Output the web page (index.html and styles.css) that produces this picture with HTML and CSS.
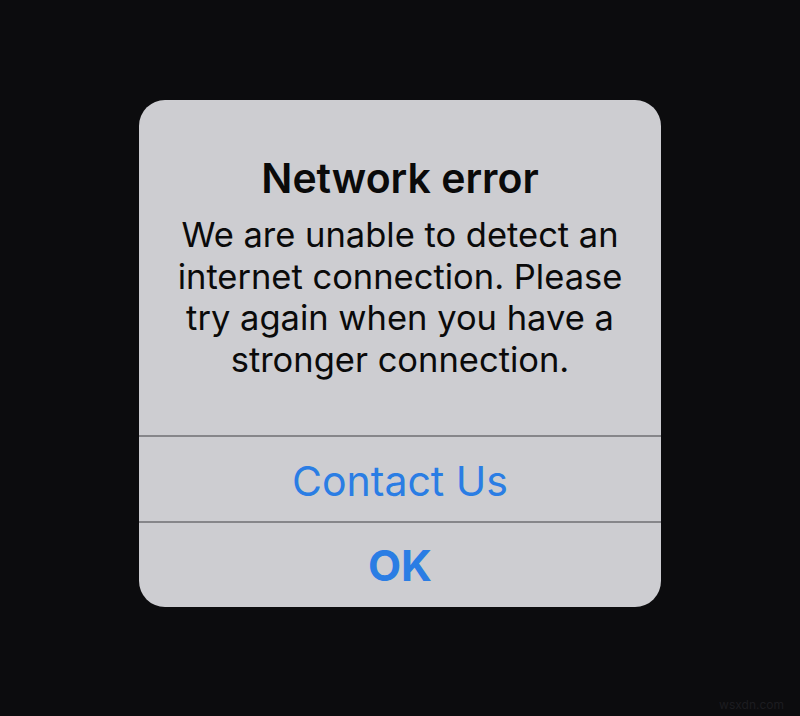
FILE: index.html
```html
<!DOCTYPE html>
<html>
<head>
<meta charset="utf-8">
<link rel="stylesheet" href="styles.css">
</head>
<body>
<div class="screen">
  <div class="alert">
    <div class="content">
      <div class="title">Network error</div>
      <div class="message">We are unable to detect an internet connection. Please try again when you have a stronger connection.</div>
    </div>
    <div class="btn contact">Contact Us</div>
    <div class="btn bold">OK</div>
  </div>
  <div class="watermark">wsxdn.com</div>
</div>
</body>
</html>
```
FILE: styles.css
```css
html, body {
  margin: 0;
  padding: 0;
  background: #0c0c0e;
}
.screen {
  width: 800px;
  height: 716px;
  box-sizing: border-box;
  padding: 100px 0 0 139px;
  position: relative;
  font-family: Inter, "Noto Sans", sans-serif;
}
.alert {
  width: 522px;
  height: 507px;
  background: #cdcdd1;
  border-radius: 26px;
  display: flex;
  flex-direction: column;
  overflow: hidden;
}
.content {
  height: 336px;
  box-sizing: border-box;
  padding: 54px 26px 0;
  text-align: center;
  color: #0a0a0a;
}
.title {
  font-size: 41px;
  font-weight: 600;
  line-height: 48px;
  margin-bottom: 12px;
}
.message {
  font-size: 34.5px;
  line-height: 41.5px;
}
.btn {
  height: 84px;
  box-sizing: content-box;
  border-top: 2px solid #86868a;
  display: flex;
  align-items: center;
  justify-content: center;
  color: #2a7de4;
  font-size: 41px;
}
.btn.contact {
  box-sizing: border-box;
  height: 86px;
  padding-top: 3px;
}
.btn.bold {
  font-weight: 650;
  font-size: 43px;
}
.watermark {
  position: absolute;
  right: 16px;
  bottom: 4px;
  font-size: 12px;
  color: #1c1c20;
}
```
